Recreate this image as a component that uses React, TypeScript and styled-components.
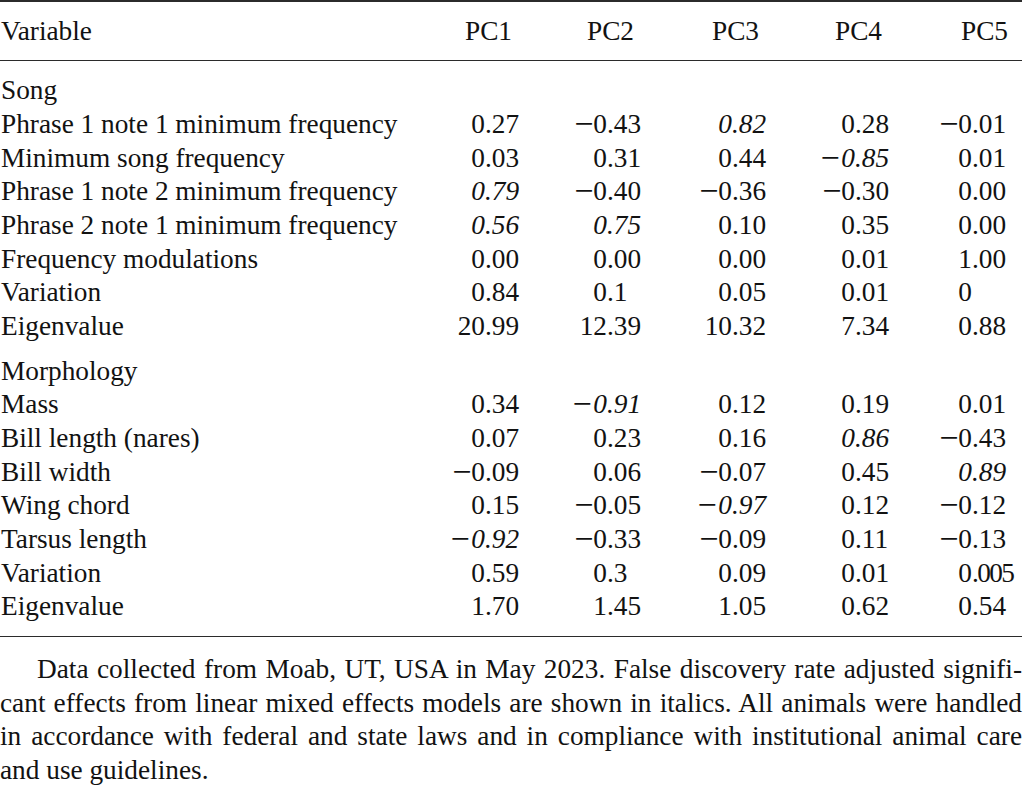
import styled, { createGlobalStyle } from "styled-components";

const GlobalStyle = createGlobalStyle`
    html, body {
        margin: 0;
        padding: 0;
        background: #fff;
    }
    body {
        font-family: "Liberation Serif", "Times New Roman", serif;
        color: #121212;
    }
`

const COLS = "425px 122px 125px 123px 117px 110px";

const Page = styled.div`
    width: 1022px;
    font-size: 27.3px;
    line-height: 33.7px;
`
const Table = styled.div`
    border-top: 2px solid #2b2b2b;
    border-bottom: 1.5px solid #2b2b2b;
`
const HeadRow = styled.div`
    display: grid;
    grid-template-columns: ${COLS};
    padding: 12.5px 0 12px;
    border-bottom: 1.5px solid #2b2b2b;
`
const HeadCell = styled.div<{ $w?: number }>`
    width: ${p => p.$w ?? 87}px;
    text-align: right;
    white-space: nowrap;
`
const Group = styled.div<{ $top: number; $bottom?: number }>`
    padding-top: ${p => p.$top}px;
    padding-bottom: ${p => p.$bottom ?? 0}px;
`
const Row = styled.div`
    display: grid;
    grid-template-columns: ${COLS};
    height: 33.7px;
`
const Label = styled.div`
    padding-left: 1px;
    white-space: nowrap;
`
const Cell = styled.div<{ $it?: boolean }>`
    display: flex;
    font-style: ${p => (p.$it ? "italic" : "normal")};
    white-space: nowrap;
`
const Int = styled.span`
    width: 60px;
    flex-shrink: 0;
    text-align: right;
`
const Minus = styled.span`
    font-size: 34px;
    line-height: 0;
    vertical-align: -1.7px;
`
const Frac = styled.span<{ $tight?: boolean }>`
    letter-spacing: ${p => (p.$tight ? "-1.6px" : "0")};
`
const Foot = styled.div`
    padding-top: 16px;
    line-height: 33.5px;
`
const FootLine = styled.div<{ $indent?: boolean; $last?: boolean }>`
    white-space: nowrap;
    text-align: justify;
    text-align-last: ${p => (p.$last ? "left" : "justify")};
    text-indent: ${p => (p.$indent ? "37px" : "0")};
`

type Line = [string, string[]];

const song: Line[] = [
    ["Phrase 1 note 1 minimum frequency", ["0.27", "−0.43", "*0.82", "0.28", "−0.01"]],
    ["Minimum song frequency", ["0.03", "0.31", "0.44", "*−0.85", "0.01"]],
    ["Phrase 1 note 2 minimum frequency", ["*0.79", "−0.40", "−0.36", "−0.30", "0.00"]],
    ["Phrase 2 note 1 minimum frequency", ["*0.56", "*0.75", "0.10", "0.35", "0.00"]],
    ["Frequency modulations", ["0.00", "0.00", "0.00", "0.01", "1.00"]],
    ["Variation", ["0.84", "0.1", "0.05", "0.01", "0"]],
    ["Eigenvalue", ["20.99", "12.39", "10.32", "7.34", "0.88"]],
];

const morphology: Line[] = [
    ["Mass", ["0.34", "*−0.91", "0.12", "0.19", "0.01"]],
    ["Bill length (nares)", ["0.07", "0.23", "0.16", "*0.86", "−0.43"]],
    ["Bill width", ["−0.09", "0.06", "−0.07", "0.45", "*0.89"]],
    ["Wing chord", ["0.15", "−0.05", "*−0.97", "0.12", "−0.12"]],
    ["Tarsus length", ["*−0.92", "−0.33", "−0.09", "0.11", "−0.13"]],
    ["Variation", ["0.59", "0.3", "0.09", "0.01", "0.005"]],
    ["Eigenvalue", ["1.70", "1.45", "1.05", "0.62", "0.54"]],
];

function Value({ raw }: { raw: string }) {
    const it = raw.startsWith("*");
    const v = it ? raw.slice(1) : raw;
    const neg = v.startsWith("−");
    const num = neg ? v.slice(1) : v;
    const dot = num.indexOf(".");
    const whole = dot < 0 ? num : num.slice(0, dot);
    const frac = dot < 0 ? "" : num.slice(dot);
    return (
        <Cell $it={it}>
            <Int>
                {neg && <Minus>−</Minus>}
                {whole}
            </Int>
            <Frac $tight={frac.length > 3}>{frac}</Frac>
        </Cell>
    );
}

function Section({ title, lines, top, bottom }: { title: string; lines: Line[]; top: number; bottom?: number }) {
    return (
        <Group $top={top} $bottom={bottom}>
            <Row>
                <Label>{title}</Label>
            </Row>
            {lines.map(([label, values], i) => (
                <Row key={i}>
                    <Label>{label}</Label>
                    {values.map((v, j) => (
                        <Value key={j} raw={v} />
                    ))}
                </Row>
            ))}
        </Group>
    );
}

export default function App() {
    return (
        <Page>
            <GlobalStyle />
            <Table>
                <HeadRow>
                    <Label>Variable</Label>
                    <HeadCell>PC1</HeadCell>
                    <HeadCell>PC2</HeadCell>
                    <HeadCell>PC3</HeadCell>
                    <HeadCell>PC4</HeadCell>
                    <HeadCell $w={96}>PC5</HeadCell>
                </HeadRow>
                <Section title="Song" lines={song} top={13} />
                <Section title="Morphology" lines={morphology} top={10.9} bottom={12} />
            </Table>
            <Foot>
                <FootLine $indent>Data collected from Moab, UT, USA in May 2023. False discovery rate adjusted signifi-</FootLine>
                <FootLine>cant effects from linear mixed effects models are shown in italics. All animals were handled</FootLine>
                <FootLine>in accordance with federal and state laws and in compliance with institutional animal care</FootLine>
                <FootLine $last>and use guidelines.</FootLine>
            </Foot>
        </Page>
    );
}
